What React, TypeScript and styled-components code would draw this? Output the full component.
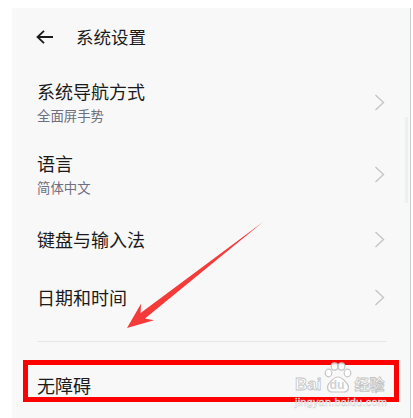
import React from "react";
import styled, {createGlobalStyle} from "styled-components";

const GlobalStyle = createGlobalStyle`
  html, body {
    margin: 0;
    padding: 0;
    background: #ffffff;
  }
  body {
    font-family: "Noto Sans CJK SC", "Noto Sans", sans-serif;
    color: #1b1b1b;
  }
`;

const Page = styled.div`
  position: relative;
  width: 413px;
  height: 418px;
  overflow: hidden;
  display: flex;
  padding: 8px 0 0 12px;
  box-sizing: border-box;
`;

const Panel = styled.div`
  position: relative;
  width: 398px;
  height: 410px;
  background: #f8f8f8;
  border-right: 1px solid #c7ccd5;
  display: flex;
  flex-direction: column;
`;

const ScrollThumb = styled.div`
  position: absolute;
  right: 2px;
  top: 109px;
  width: 3px;
  height: 86px;
  background: #efeff0;
`;

const Header = styled.div`
  height: 58px;
  display: flex;
  align-items: center;
  padding-left: 24px;
  gap: 22px;
`;

const HeaderTitle = styled.div`
  font-size: 17.5px;
  line-height: 22px;
  color: #1b1b1b;
`;

const Row = styled.div<{ $h: number }>`
  height: ${(p) => p.$h}px;
  display: flex;
  align-items: center;
  justify-content: space-between;
  padding: 0 25px 0 25px;
`;

const RowText = styled.div`
  display: flex;
  flex-direction: column;
`;

const RowTitle = styled.div`
  font-size: 18px;
  line-height: 22px;
  color: #1b1b1b;
`;

const RowSub = styled.div`
  margin-top: 4px;
  font-size: 13.4px;
  line-height: 18px;
  color: #6e6f80;
`;

const Divider = styled.div`
  margin: 15px 23px 14px 25px;
  height: 1px;
  background: #e6e6e6;
`;

const Highlight = styled.div`
  position: absolute;
  left: 11px;
  top: 352px;
  width: 376px;
  height: 42px;
  border: 5px solid #ff0000;
  box-sizing: border-box;
`;

const Overlay = styled.svg`
  position: absolute;
  left: 0;
  top: 0;
  pointer-events: none;
`;

const Watermark = styled.div`
  position: absolute;
  left: 295px;
  top: 362px;
  display: flex;
  flex-direction: column;
  align-items: flex-start;
  color: rgba(255, 255, 255, 0.92);
  -webkit-text-stroke: 0.8px #c4c4c4;
`;

const BrandLine = styled.div`
  display: flex;
  align-items: flex-end;
  height: 31px;
  font-family: "Liberation Sans", Arial, sans-serif;
  font-weight: bold;
  font-size: 17px;
  line-height: 17px;
`;

const PawMark = styled.div`
  position: relative;
  width: 28px;
  height: 31px;
  margin: 0 2px 0 3px;
`;

const PawText = styled.span`
  position: absolute;
  left: 5px;
  bottom: 1px;
  font-size: 12.5px;
  line-height: 14px;
  color: #d2d2d2;
  -webkit-text-stroke: 0;
`;

const BrandCn = styled.span`
  font-family: "Noto Sans CJK SC", sans-serif;
  font-weight: bold;
  font-size: 15px;
  line-height: 18px;
`;

const Url = styled.div`
  font-family: "Liberation Sans", Arial, sans-serif;
  font-size: 11px;
  line-height: 12px;
  margin-top: 3px;
  letter-spacing: 0.2px;
  -webkit-text-stroke: 0.4px #cfcfcf;
`;

const BackArrow = () => (
  <svg width="18" height="14" viewBox="0 0 18 14">
    <path d="M17 7H1.5M8 0.8L1.5 7L8 13.2" fill="none" stroke="#1b1b1b" strokeWidth="1.8" />
  </svg>
);

const Chevron = () => (
  <svg width="11" height="17" viewBox="0 0 11 17">
    <polyline points="1.5,1 9.5,8.5 1.5,16" fill="none" stroke="#c5c5c5" strokeWidth="1.4" />
  </svg>
);

const Paw = () => (
  <PawMark>
    <svg width="28" height="31" viewBox="0 0 28 31" style={{position: "absolute", left: 0, top: 0}}>
      <g fill="rgba(255,255,255,0.92)" stroke="#c6c6c6" strokeWidth="1.2">
        <ellipse cx="4.5" cy="11" rx="3.3" ry="3.8" />
        <ellipse cx="10.5" cy="4.5" rx="3.3" ry="3.6" />
        <ellipse cx="17.5" cy="4.5" rx="3.3" ry="3.6" />
        <ellipse cx="23.5" cy="11" rx="3.3" ry="3.8" />
        <path d="M14 15c4 0 6 3 9 6.5c3 3.5 1.5 8.5-3 8.5h-12c-4.5 0-6-5-3-8.5c3-3.5 5-6.5 9-6.5z" />
      </g>
    </svg>
    <PawText>du</PawText>
  </PawMark>
);

const items = [
  {title: "系统导航方式", sub: "全面屏手势", h: 72},
  {title: "语言", sub: "简体中文", h: 72},
  {title: "键盘与输入法", h: 58},
  {title: "日期和时间", h: 58},
];

export default function App() {
  return (
    <>
      <GlobalStyle />
      <Page>
        <Panel>
          <ScrollThumb />
          <Header>
            <BackArrow />
            <HeaderTitle>系统设置</HeaderTitle>
          </Header>
          {items.map((it) => (
            <Row key={it.title} $h={it.h}>
              <RowText>
                <RowTitle>{it.title}</RowTitle>
                {it.sub && <RowSub>{it.sub}</RowSub>}
              </RowText>
              <Chevron />
            </Row>
          ))}
          <Divider />
          <Row $h={58}>
            <RowText>
              <RowTitle>无障碍</RowTitle>
            </RowText>
            <Chevron />
          </Row>
          <Highlight />
        </Panel>
        <Watermark>
          <BrandLine>
            Bai
            <Paw />
            <BrandCn>经验</BrandCn>
          </BrandLine>
          <Url>jingyan.baidu.com</Url>
        </Watermark>
        <Overlay width="413" height="418" viewBox="0 0 413 418">
          <polygon
            points="263,222 145,318.5 154,320.3 127,328 141,303.7 140.6,312.9"
            fill="#f53a3a"
          />
        </Overlay>
      </Page>
    </>
  );
}
